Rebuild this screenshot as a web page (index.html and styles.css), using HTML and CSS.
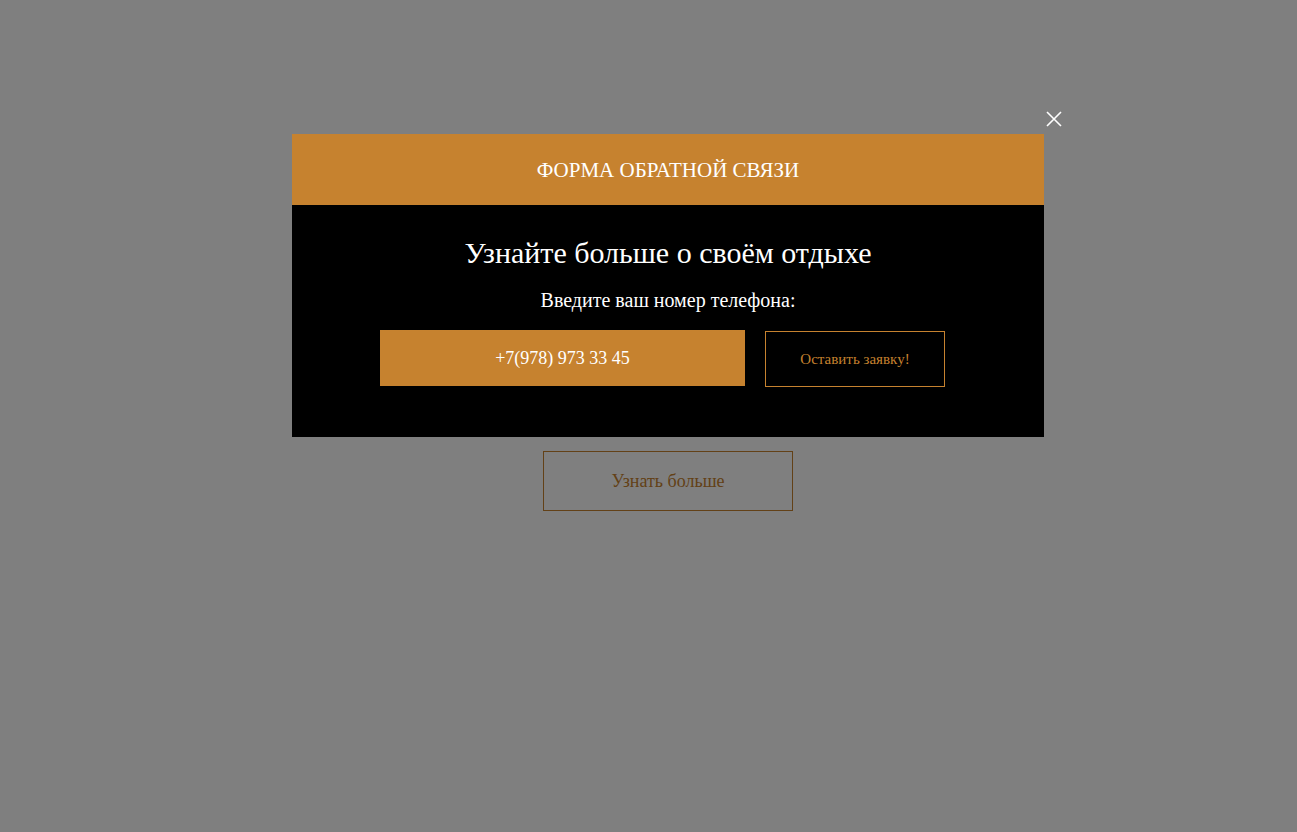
FILE: index.html
```html
<!DOCTYPE html>
<html lang="ru">
<head>
<meta charset="utf-8">
<title>Форма обратной связи</title>
<link rel="stylesheet" href="styles.css">
</head>
<body>
<main class="page">
  <section class="hero">
    <a class="hero-btn" href="#">Узнать больше</a>
  </section>
</main>

<div class="overlay">
  <div class="modal">
    <button class="modal-close" type="button" aria-label="Закрыть">
      <svg width="16" height="16" viewBox="0 0 16 16"><path d="M1 1L15 15M15 1L1 15" stroke="#fff" stroke-width="1.6" fill="none"/></svg>
    </button>
    <div class="modal-head">ФОРМА ОБРАТНОЙ СВЯЗИ</div>
    <div class="modal-body">
      <h2 class="modal-title">Узнайте больше о своём отдыхе</h2>
      <p class="modal-label">Введите ваш номер телефона:</p>
      <form class="modal-form">
        <input class="phone" type="text" value="+7(978) 973 33 45">
        <button class="submit" type="button">Оставить заявку!</button>
      </form>
    </div>
  </div>
</div>
</body>
</html>
```

FILE: styles.css
```css
html, body {
  margin: 0;
  padding: 0;
  background: #fff;
  font-family: "Liberation Serif", "Times New Roman", serif;
}

.page {
  min-height: 832px;
}

.hero {
  display: flex;
  flex-direction: column;
  align-items: center;
  padding: 451px 0 0 39px;
}

.hero-btn {
  box-sizing: border-box;
  width: 250px;
  height: 60px;
  border: 1px solid #c6822f;
  display: flex;
  align-items: center;
  justify-content: center;
  font-size: 18px;
  color: #c6822f;
  text-decoration: none;
}

.overlay {
  position: fixed;
  inset: 0;
  background: rgba(0, 0, 0, 0.5);
  padding: 134px 0 0 292px;
}

.modal {
  position: relative;
  width: 752px;
}

.modal-close {
  position: absolute;
  right: -18px;
  top: -23px;
  width: 16px;
  height: 16px;
  padding: 0;
  border: 0;
  background: none;
  display: flex;
  cursor: pointer;
}

.modal-head {
  height: 71px;
  background: #c6822f;
  color: #fff;
  display: flex;
  align-items: center;
  justify-content: center;
  font-size: 21px;
  padding-top: 1px;
  box-sizing: border-box;
}

.modal-body {
  background: #000;
  padding: 30px 0 50px;
  display: flex;
  flex-direction: column;
  align-items: center;
}

.modal-title {
  margin: 0;
  font-size: 30px;
  line-height: 36px;
  font-weight: normal;
  color: #fff;
}

.modal-label {
  margin: 17px 0 0;
  font-size: 20px;
  line-height: 24px;
  color: #fff;
}

.modal-form {
  margin: 18px 0 0 -11px;
  display: flex;
  gap: 20px;
  align-items: flex-start;
}

.phone {
  box-sizing: border-box;
  width: 365px;
  height: 56px;
  border: 0;
  background: #c6822f;
  color: #fff;
  text-align: center;
  font-family: inherit;
  font-size: 18px;
  outline: none;
}

.submit {
  box-sizing: border-box;
  width: 180px;
  height: 56px;
  margin-top: 1px;
  border: 1px solid #c6822f;
  background: #000;
  color: #c6822f;
  font-family: inherit;
  font-size: 15px;
  cursor: pointer;
}
```
